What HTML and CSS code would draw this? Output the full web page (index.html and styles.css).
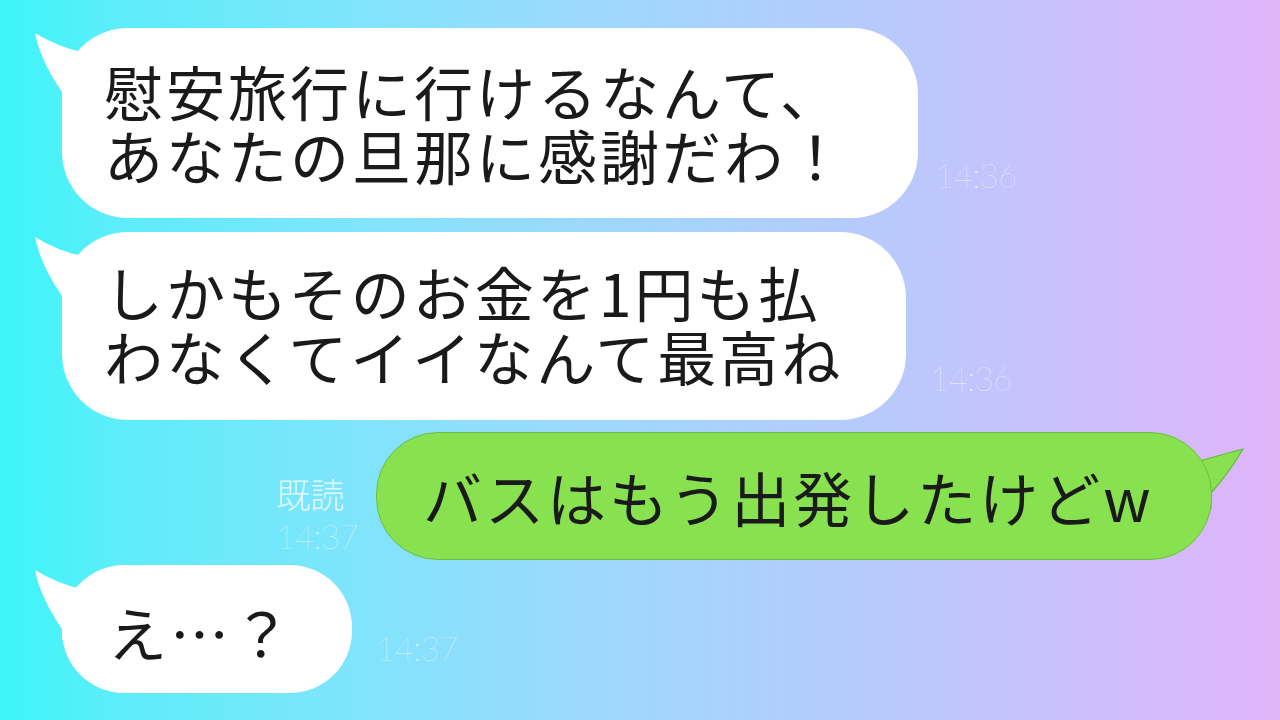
FILE: index.html
```html
<!DOCTYPE html>
<html lang="ja">
<head>
<meta charset="utf-8">
<title>chat</title>
<link rel="stylesheet" href="styles.css">
</head>
<body>
<div class="page">
  <div class="row row-in row-1">
    <div class="bubble bubble-white b1">
      <svg class="tail tail-left" width="60" height="80" viewBox="0 0 60 80"><path d="M3,5 Q26,19 50,24 L50,75 L30,75 L30,64 Q8,32 3,5 Z" fill="#fff"/></svg>
      <p class="msg">慰安旅行に行けるなんて、<br>あなたの旦那に感謝だわ！</p>
    </div>
    <div class="meta meta-1"><span class="time">14:36</span></div>
  </div>

  <div class="row row-in row-2">
    <div class="bubble bubble-white b2">
      <svg class="tail tail-left" width="60" height="80" viewBox="0 0 60 80"><path d="M3,5 Q26,19 50,24 L50,75 L30,75 L30,64 Q8,32 3,5 Z" fill="#fff"/></svg>
      <p class="msg">しかもそのお金を1円も払<br>わなくてイイなんて最高ね</p>
    </div>
    <div class="meta meta-2"><span class="time">14:36</span></div>
  </div>

  <div class="row row-out row-3">
    <div class="meta meta-3">
      <span class="read">既読</span>
      <span class="time">14:37</span>
    </div>
    <div class="bubble bubble-green b3">
      <svg class="tail tail-right" width="70" height="80" viewBox="0 0 70 80"><path d="M62,16 Q39,22 12,30 L0,30 L0,75 L30,75 L30,60 Q48,40 62,16 Z" fill="#88e24f" stroke="#66b93e" stroke-width="1.2"/></svg>
      <p class="msg">バスはもう出発したけどw</p>
    </div>
  </div>

  <div class="row row-in row-4">
    <div class="bubble bubble-white b4">
      <svg class="tail tail-left" width="60" height="80" viewBox="0 0 60 80"><path d="M3,5 Q26,19 50,24 L50,75 L30,75 L30,64 Q8,32 3,5 Z" fill="#fff"/></svg>
      <p class="msg">え…？</p>
    </div>
    <div class="meta meta-4"><span class="time">14:37</span></div>
  </div>
</div>
</body>
</html>
```

FILE: styles.css
```css
html, body {
  margin: 0;
  padding: 0;
}

body {
  width: 1280px;
  height: 720px;
  overflow: hidden;
  background: linear-gradient(to right, #3ef6f7 0%, #44f4f8 2.5%, #5cedfa 9%, #80e4fc 28%, #9cd9fc 45%, #b3ccfc 65%, #c9c1fc 82%, #e0b4f8 100%);
  font-family: "Noto Sans CJK JP", "Noto Sans", sans-serif;
}

.page {
  position: relative;
  z-index: 0;
  display: flex;
  flex-direction: column;
  padding-top: 28px;
}

.row {
  display: flex;
  align-items: flex-end;
}

.row-in {
  padding-left: 62px;
}

.row-out {
  justify-content: flex-end;
  padding-right: 68px;
}

.row-2 { margin-top: 14px; }
.row-3 { margin-top: 12px; }
.row-4 { margin-top: 5px; }

.bubble {
  position: relative;
  box-sizing: border-box;
}

.bubble-white {
  background: #ffffff;
}

.bubble-green {
  background: #88e24f;
  border: 1px solid #6cbf42;
}

.tail {
  position: absolute;
  z-index: -1;
  top: 0;
}

.tail-left {
  left: -30px;
}

.tail-right {
  right: -40px;
  top: 0;
}

.msg {
  margin: 0;
  font-size: 59px;
  line-height: 64px;
  font-weight: 400;
  color: #1a1a1a;
  white-space: nowrap;
  letter-spacing: 3px;
}

.b1 {
  width: 856px;
  height: 190px;
  border-radius: 66px;
  padding: 31px 0 0 42px;
}

.b2 {
  width: 844px;
  height: 188px;
  border-radius: 66px;
  padding: 28px 0 0 42px;
}

.b3 {
  width: 836px;
  height: 128px;
  border-radius: 62px;
  padding: 32px 0 0 46px;
}

.b4 {
  width: 290px;
  height: 128px;
  border-radius: 62px;
  padding: 35px 0 0 46px;
}

.meta {
  display: flex;
  flex-direction: column;
  color: rgba(255, 255, 255, 0.85);
}

.time {
  font-family: "Lato", "Liberation Sans", sans-serif;
  font-weight: 200;
  font-size: 33px;
  line-height: 36px;
  letter-spacing: -0.5px;
}

.read {
  font-family: "Noto Sans CJK JP", sans-serif;
  font-weight: 300;
  font-size: 34px;
  line-height: 42px;
  color: rgba(255, 255, 255, 0.8);
}

.meta-1 {
  margin-left: 17px;
  margin-bottom: 25px;
}

.meta-2 {
  margin-left: 24px;
  margin-bottom: 24px;
}

.meta-3 {
  margin-right: 18px;
  margin-bottom: 3px;
  align-items: flex-start;
}

.meta-3 .time {
  line-height: 42px;
}

.meta-4 {
  margin-left: 24px;
  margin-bottom: 27px;
}
```
